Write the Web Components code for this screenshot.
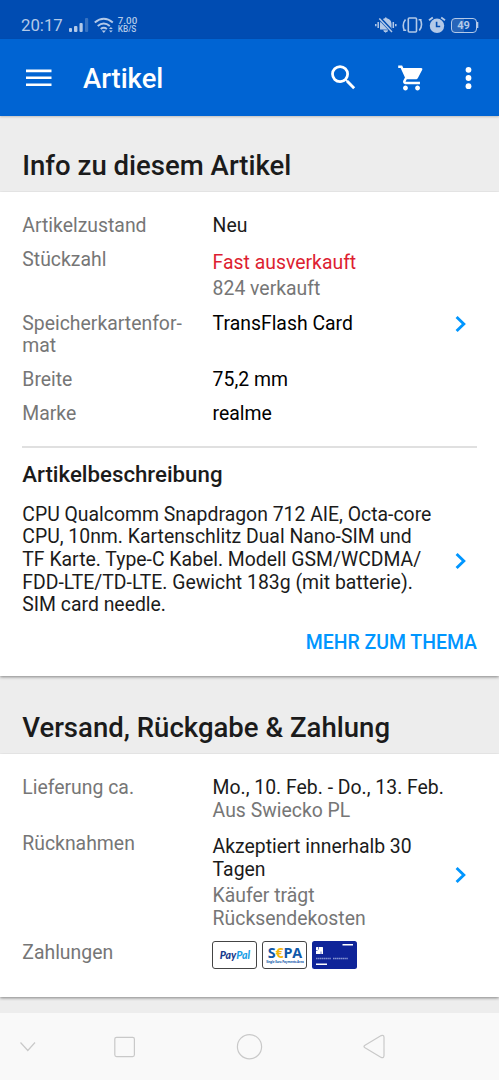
<!DOCTYPE html>
<html lang="de">
<head>
<meta charset="utf-8">
<title>Artikel</title>
<style>
body { margin: 0; background: #ededed; font-family: Roboto, "Liberation Sans", sans-serif; }
</style>
</head>
<body>
<article-screen></article-screen>
<script>
const define = (name, html) => {
  const template = document.createElement('template');
  template.innerHTML = html;
  customElements.define(name, class extends HTMLElement {
    constructor() {
      super();
      this.attachShadow({ mode: 'open' }).append(template.content.cloneNode(true));
    }
  });
};

define('status-bar', `
<style>
:host { display: flex; box-sizing: border-box; height: 39px; padding: 11px 20.5px 0 21px; background: #004cb2; color: #b3c9e8; justify-content: space-between; align-items: center; }
.side { display: flex; align-items: center; height: 28px; }
.time { font-size: 16.8px; line-height: 20px; }
.speed { font-size: 9.8px; line-height: 8px; font-weight: 500; margin-left: 4px; }
.speed div + div { font-size: 8.2px; }
svg { display: block; }
.battery { box-sizing: border-box; width: 26px; height: 15px; border: 1.4px solid #b3c9e8; border-radius: 4px; font-size: 11px; line-height: 13.5px; text-align: center; font-weight: 700; background: linear-gradient(90deg, #2865b9 50%, #004cb2 50%); }
</style>
<div class="side">
  <span class="time">20:17</span>
  <svg style="margin-left:5px" width="21" height="16" viewBox="0 0 21 16" fill="currentColor"><rect x="1" y="11" width="3" height="4" rx="1"/><rect x="6" y="9" width="3.4" height="6" rx="1"/><rect x="11.5" y="6" width="3.2" height="9" rx="1"/><rect x="17" y="1" width="3.2" height="14" rx="1" opacity=".3"/></svg>
  <svg style="margin-left:5px" width="20" height="17" viewBox="0 0 20 17" fill="none" stroke="currentColor" stroke-width="2"><path d="M.8 5.5Q9.8-2 18.8 5.5M3.7 9Q9.8 4 15.8 9M6.7 12Q9.8 9.7 12.9 12"/><path d="M7.700 13.500h4.200l-2.100 2.600zM15 12l1.900-2 1.900 2zM15 13.500l1.900 2 1.900-2z" fill="currentColor" stroke="none"/></svg>
  <div class="speed"><div>7.00</div><div>KB/S</div></div>
</div>
<div class="side">
  <svg width="22" height="18" viewBox="0 0 22 18" fill="none" stroke="currentColor"><path d="M5 13.500V7.500Q5.500 3 9.700 2.200Q10.800.2 11.800 2.200Q16 3 16.500 7.500V12L17.500 13.800Z" fill="currentColor" stroke="none"/><path d="M8.700 14.800h4Q10.700 17.500 8.700 14.800" fill="currentColor"/><path d="M4 1.500L17.500 16" stroke="#004cb2" stroke-width="3.400"/><path d="M4.300 2.500L17 16M.8 8v2.300M3.200 6v6M18.300 6v6M20.800 8v2.300" stroke-width="1.500"/></svg>
  <svg style="margin-left:5px" width="21" height="18" viewBox="0 0 21 18" fill="none" stroke="currentColor" stroke-width="1.600"><rect x="6.300" y="2" width="8.200" height="14" rx="1"/><path d="M3.500 3.500Q-.2 8 2.200 14M1.200 14.300h3M17.300 14.500Q21 10 18.600 4M19.600 3.700h-3"/></svg>
  <svg style="margin-left:5px" width="18" height="18" viewBox="0 0 18 18"><circle cx="9" cy="9.800" r="7.200" fill="currentColor"/><path d="M1 4.300L4.800 1.500M17 4.300L13.200 1.500" stroke="currentColor" stroke-width="1.800"/><path d="M8.600 5.800v4.700h3.600" fill="none" stroke="#004cb2" stroke-width="1.600"/></svg>
  <div class="battery" style="margin-left:5px">49</div>
  <svg width="2" height="6"><rect width="1.300" height="6" fill="currentColor"/></svg>
</div>`);

define('app-bar', `
<style>
:host { display: flex; box-sizing: border-box; height: 77px; padding: 0 20px 0 20px; background: #0064d3; color: #fff; align-items: center; position: relative; box-shadow: 0 1px 2px rgba(0,0,0,.2); }
h1 { margin: 2px auto 0 26px; font-size: 27.400px; line-height: 34px; font-weight: 500; }
svg { display: block; fill: currentColor; }
</style>
<svg width="37" height="37" viewBox="0 0 37 37"><path d="M6 10.600h25.500v2.600H6zM6 17.500h25.500v2.600H6zM6 24.400h25.500V27H6z"/></svg>
<h1>Artikel</h1>
<svg width="33" height="33" viewBox="0 0 24 24" style="margin-right:37px"><path d="M15.500 14h-.790l-.280-.270A6.470 6.470 0 0 0 16 9.500A6.500 6.500 0 1 0 9.500 16c1.610 0 3.090-.590 4.230-1.570l.270.280v.790l5 4.990L20.490 19zM9.500 14A4.500 4.500 0 1 1 9.500 5a4.500 4.500 0 0 1 0 9z"/></svg>
<svg width="29" height="30" viewBox="0 0 24 24" preserveAspectRatio="none" style="margin-right:31px"><path d="M7 18c-1.100 0-1.990.900-1.990 2S5.900 22 7 22s2-.900 2-2-.900-2-2-2zM1 2v2h2l3.600 7.590-1.350 2.450c-.160.280-.250.610-.250.960 0 1.100.900 2 2 2h12v-2H7.420c-.140 0-.250-.110-.250-.250l.030-.120.900-1.630h7.450c.750 0 1.410-.410 1.750-1.030l3.580-6.490A1 1 0 0 0 20 4H5.210l-.940-2zm16 16c-1.100 0-1.990.900-1.990 2s.890 2 1.990 2 2-.900 2-2-.900-2-2-2z"/></svg>
<svg width="22" height="26" viewBox="0 0 22 26"><circle cx="11.500" cy="4.800" r="2.900"/><circle cx="11.500" cy="13" r="2.900"/><circle cx="11.500" cy="21.200" r="2.900"/></svg>`);

define('section-title', `
<style>
:host { display: block; box-sizing: border-box; padding-left: 22.200px; font-size: 27.550px; line-height: 33px; font-weight: 500; color: #1b1b1b; }
</style><slot></slot>`);

define('info-card', `
<style>
:host { display: block; box-sizing: border-box; padding-left: 22.300px; padding-right: 22px; background: #fff; font-size: 19.400px; line-height: 22.700px; color: #1b1b1b; box-shadow: 0 1px 3px rgba(0,0,0,.45); clip-path: inset(0 0 -5px 0); }
</style><slot></slot>`);

define('chevron-icon', `
<style>:host { display: block; width: 12px; height: 18px; } svg { display: block; }</style>
<svg width="12" height="18" viewBox="0 0 12 18"><path d="M1.600 2L8.800 9L1.600 16" fill="none" stroke="#0096ff" stroke-width="2.900"/></svg>`);

define('info-row', `
<style>
:host { display: grid; grid-template-columns: 190.300px 1fr 22px; box-sizing: border-box; }
.label { color: #767676; }
.value { padding-top: var(--value-top, 0); }
.action { align-self: center; }
</style>
<div class="label"><slot name="label"></slot></div>
<div class="value"><slot></slot></div>
<div class="action"><slot name="action"></slot></div>`);

define('item-description', `
<style>
:host { display: block; border-top: 2px solid #e0e0e0; }
h2 { margin: 13px 0 0; font-size: 22.250px; line-height: 26px; font-weight: 500; }
.body { display: grid; grid-template-columns: 1fr 22px; align-items: center; margin-top: 16.500px; }
.more { margin-top: 14.500px; text-align: right; color: #0096ff; font-weight: 500; font-size: 19.450px; }
</style>
<h2>Artikelbeschreibung</h2>
<div class="body"><div>CPU Qualcomm Snapdragon 712 AIE, Octa-core<br>CPU, 10nm. Kartenschlitz Dual Nano-SIM und<br>TF Karte. Type-C Kabel. Modell GSM/WCDMA/<br>FDD-LTE/TD-LTE. Gewicht 183g (mit batterie).<br>SIM card needle.</div><chevron-icon style="margin-top:2px"></chevron-icon></div>
<div class="more">MEHR ZUM THEMA</div>`);

define('payment-cards', `
<style>
:host { display: flex; gap: 5px; margin-left: -.200px; margin-top: -1px; }
.card { box-sizing: border-box; width: 45px; height: 28px; border: 1px solid #444; border-radius: 3px; background: #fff; display: flex; flex-direction: column; align-items: center; justify-content: center; white-space: nowrap; }
.paypal { font: italic 900 10.500px/12px Lato, sans-serif; color: #173a8c; }
.paypal span span { color: #1ba0e6; }
.sepa { font: 700 14.300px/14px "Open Sans", sans-serif; letter-spacing: -.200px; color: #1058a8; }
.sepa i { color: #f5b80c; font-style: normal; }
.sepa small { font-size: 3px; line-height: 4px; font-weight: 700; letter-spacing: -.100px; }
svg { display: block; }
</style>
<div class="card paypal"><span>Pay<span>Pal</span></span></div>
<div class="card sepa"><span>S<i>€</i>PA</span><small>Single Euro Payments Area</small></div>
<svg width="45" height="28" viewBox="0 0 45 28"><rect width="45" height="28" rx="2.500" fill="#0f2499"/><path d="M30.500 3H41v1.600H30.500zM4 22.500h11v1.600H4z" fill="#fff"/><rect x="4" y="6" width="7" height="7" rx=".600" fill="#fff"/><path d="M6.500 6v2.500M9 10.500V13M4 9.500h1.500" stroke="#0f2499" stroke-width=".600"/><path d="M4 17.500h15M21 17.500h15" stroke="#8291d0" stroke-width="1.600" stroke-dasharray="1.500 .400"/></svg>`);

define('nav-bar', `
<style>
:host { display: block; position: relative; height: 67px; background: #f9f9f9; }
svg { display: block; }
</style>
<svg width="499" height="67" viewBox="0 0 499 67" fill="none" stroke="#c9c9c9" stroke-width="1.200"><path d="M20.500 29.500L27.800 37.500L35 29.500"/><rect x="114.800" y="24.300" width="19.600" height="19.300" rx="1.800"/><circle cx="249.500" cy="33.700" r="12.100"/><path d="M365 32.200L381.200 22.600Q383.800 21.500 384 24.200V42.500Q383.800 45.500 381.200 44.400L365 34.800Q363 33.500 365 32.200Z"/></svg>`);

define('article-screen', `
<style>
:host { display: block; width: 499px; height: 1080px; overflow: hidden; background: #ededed; }
.first-title { height: 75.500px; padding-top: 33px; }
.first { height: 484.500px; padding-top: 23px; }
.second-title { height: 77.500px; padding-top: 34.500px; }
.second { height: 243px; padding-top: 23px; }
.muted { color: #767676; }
.dark { color: #000; }
.low { color: #dd1e31; }
nav-bar { margin-top: 16.500px; }
</style>
<status-bar></status-bar>
<app-bar></app-bar>
<section-title class="first-title">Info zu diesem Artikel</section-title>
<info-card class="first">
  <info-row style="height:34px"><span slot="label">Artikelzustand</span>Neu</info-row>
  <info-row style="height:64px;--value-top:3px"><span slot="label">Stückzahl</span><div class="low">Fast ausverkauft</div><div class="muted" style="margin-top:3.500px">824 verkauft</div></info-row>
  <info-row style="height:56.500px"><span slot="label">Speicherkartenfor-<br>mat</span><span class="dark">TransFlash Card</span><chevron-icon slot="action" style="margin-top:-26px"></chevron-icon></info-row>
  <info-row style="height:33.500px"><span slot="label">Breite</span><span class="dark">75,2 mm</span></info-row>
  <info-row style="height:43.500px"><span slot="label">Marke</span><span class="dark">realme</span></info-row>
  <item-description></item-description>
</info-card>
<section-title class="second-title">Versand, Rückgabe &amp; Zahlung</section-title>
<info-card class="second">
  <info-row style="height:56.500px"><span slot="label">Lieferung ca.</span>Mo., 10. Feb. - Do., 13. Feb.<div class="muted" style="padding-top:.500px">Aus Swiecko PL</div></info-row>
  <info-row style="height:109px;--value-top:3px"><span slot="label">Rücknahmen</span>Akzeptiert innerhalb 30<br>Tagen<div class="muted" style="margin-top:3.500px">Käufer trägt<br>Rücksendekosten</div><chevron-icon slot="action" style="margin-top:-22px"></chevron-icon></info-row>
  <info-row><span slot="label">Zahlungen</span><payment-cards></payment-cards></info-row>
</info-card>
<nav-bar></nav-bar>`);
</script>
</body>
</html>
